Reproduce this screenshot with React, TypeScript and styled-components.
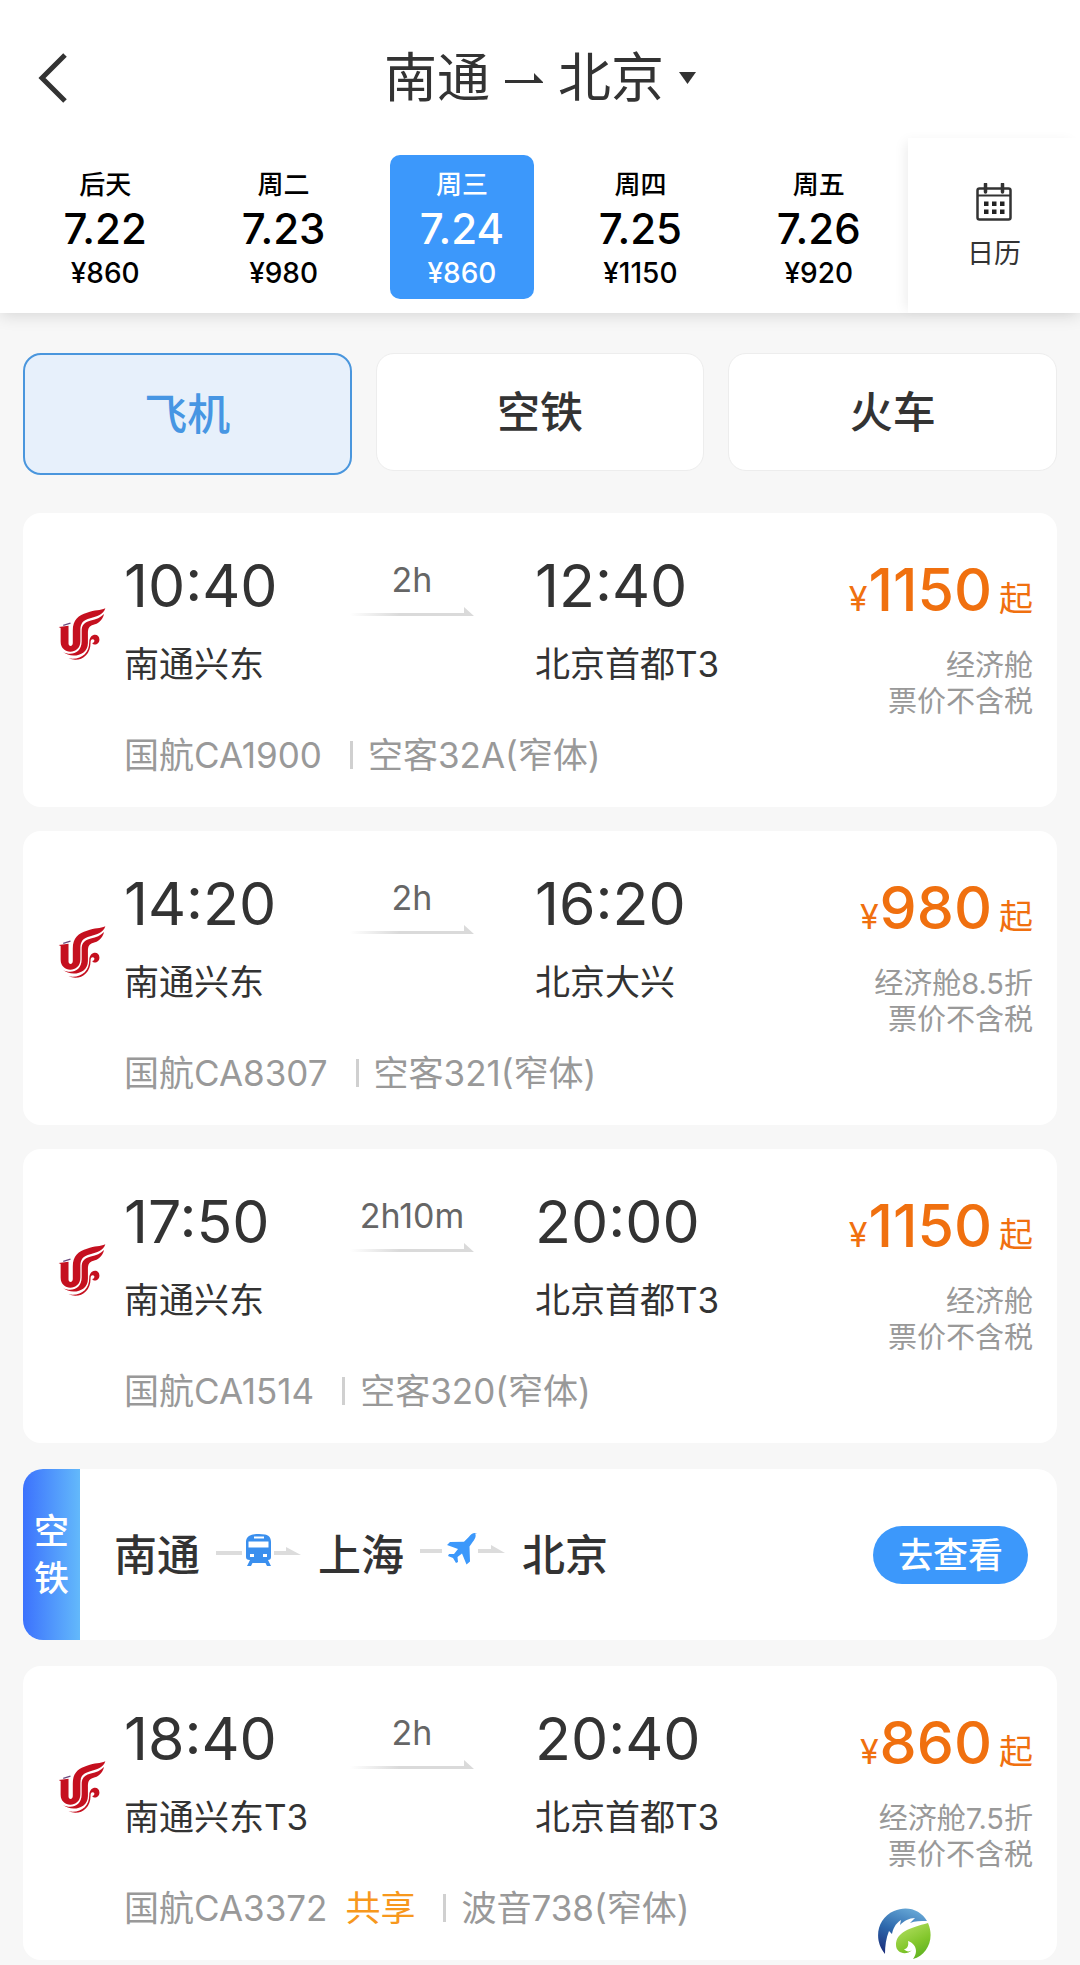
import React, { useState } from "react";
import styled, { createGlobalStyle } from "styled-components";

const GlobalStyle = createGlobalStyle`
  *, *::before, *::after { box-sizing: border-box; }
  body {
    margin: 0;
    background: #f7f7f7;
    color: #333;
    font-family: Inter, "Noto Sans CJK SC", sans-serif;
  }
  button {
    margin: 0;
    padding: 0;
    border: 0;
    background: none;
    color: inherit;
    font: inherit;
    cursor: pointer;
  }
  svg { display: block; flex: none; }
`;

const Page = styled.div`
  position: relative;
  padding-bottom: 5px;
`;

const Header = styled.header`
  position: relative;
  background: #fff;
  box-shadow: 0 2px 16px rgba(0, 0, 0, 0.14);
`;

const TitleBar = styled.div`
  display: grid;
  grid-template-columns: 104px 1fr 104px;
  align-items: center;
  padding: 42px 0 24px;
`;

const BackButton = styled.button`
  justify-self: start;
  padding: 10px 36px;
`;

const RouteButton = styled.button`
  display: flex;
  align-items: center;
  justify-content: center;
  gap: 15px;
  font-size: 53px;
  line-height: 72px;
`;

const DateStrip = styled.div`
  display: flex;
  height: 175px;
`;

const Dates = styled.div`
  flex: 1;
  display: grid;
  grid-template-columns: repeat(5, 1fr);
  justify-items: center;
  align-items: start;
  padding: 17px 0 0 16px;
`;

const DateButton = styled.button<{ $active: boolean }>`
  display: flex;
  flex-direction: column;
  align-items: center;
  width: 144px;
  padding: 10px 0 6px;
  border-radius: 10px;
  color: ${(p) => (p.$active ? "#fff" : "#000")};
  background: ${(p) => (p.$active ? "#3c98fb" : "transparent")};
  font-weight: 500;
`;

const Weekday = styled.span`
  font-size: 26px;
  line-height: 40px;
`;

const DayNumber = styled.span`
  font-size: 42px;
  line-height: 48px;
`;

const DayFare = styled.span`
  font-size: 28px;
  line-height: 40px;
`;

const CalendarButton = styled.button`
  display: flex;
  flex-direction: column;
  align-items: center;
  justify-content: center;
  gap: 14px;
  width: 172px;
  padding-top: 4px;
  background: #fff;
  box-shadow: -6px 0 12px -4px rgba(0, 0, 0, 0.08);
  font-size: 27px;
  line-height: 38px;
`;

const Content = styled.main`
  padding: 40px 23px 0;
`;

const Tabs = styled.div`
  display: grid;
  grid-template-columns: repeat(3, 1fr);
  gap: 24px;
  align-items: start;
  margin-bottom: 38px;
`;

const Tab = styled.button<{ $active: boolean }>`
  height: ${(p) => (p.$active ? "122px" : "118px")};
  border: ${(p) => (p.$active ? "2px solid #4a96dd" : "1px solid #ededed")};
  border-radius: 18px;
  background: ${(p) => (p.$active ? "#e7f0fb" : "#fff")};
  color: ${(p) => (p.$active ? "#4796e3" : "#333")};
  font-size: 43px;
  font-weight: 500;
  line-height: 60px;
`;

const List = styled.ul`
  display: flex;
  flex-direction: column;
  gap: 24px;
  margin: 0;
  padding: 0;
  list-style: none;
`;

const Card = styled.li`
  display: flex;
  padding: 43px 24px 28px 0;
  border-radius: 18px;
  background: #fff;
`;

const Carrier = styled.div`
  width: 101px;
  padding: 51px 0 0 35px;
`;

const Flight = styled.div`
  flex: 1;
`;

const Schedule = styled.div`
  display: grid;
  grid-template-columns: 226px 124px 1fr auto;
  align-items: start;
`;

const Stop = styled.div<{ $indent?: boolean }>`
  display: flex;
  flex-direction: column;
  gap: 24px;
  padding-left: ${(p) => (p.$indent ? "61px" : "0")};
`;

const Time = styled.time`
  font-size: 59px;
  line-height: 60px;
`;

const Airport = styled.span`
  font-size: 35px;
  line-height: 48px;
`;

const Duration = styled.div`
  display: flex;
  flex-direction: column;
  align-items: center;
  color: #666;
  font-size: 34px;
  line-height: 48px;
`;

const Fare = styled.div`
  display: flex;
  flex-direction: column;
  align-items: flex-end;
  gap: 28px;
  padding-top: 4px;
`;

const Price = styled.div`
  display: flex;
  align-items: baseline;
  height: 60px;
  color: #f0700f;
  font-size: 34px;
  line-height: 60px;
`;

const Amount = styled.strong`
  margin: 0 7px 0 1px;
  font-size: 59px;
  font-weight: 500;
`;

const FareNote = styled.div`
  color: #999;
  font-size: 29px;
  line-height: 36px;
  text-align: right;
`;

const Details = styled.div`
  display: flex;
  align-items: center;
  margin-top: 11px;
  color: #999;
  font-size: 35px;
  line-height: 48px;
`;

const Shared = styled.span`
  margin-left: 18px;
  color: #f7981d;
`;

const Divider = styled.span`
  width: 3px;
  height: 28px;
  margin: 0 15px 0 28px;
  background: #d0d0d0;
`;

const AirRailCard = styled.li`
  display: flex;
  align-items: center;
  gap: 34px;
  height: 171px;
  margin: 2px 0;
  padding-right: 29px;
  overflow: hidden;
  border-radius: 20px;
  background: #fff;
`;

const SideLabel = styled.div`
  display: flex;
  align-items: center;
  justify-content: center;
  align-self: stretch;
  width: 57px;
  background: linear-gradient(90deg, #3c72fd, #63b9fb);
  color: #fff;
  font-size: 35px;
  font-weight: 500;
  line-height: 47px;
  text-align: center;
`;

const SideText = styled.span`
  width: 35px;
`;

const AirRailRoute = styled.div`
  flex: 1;
  display: flex;
  align-items: flex-start;
  gap: 16px;
  font-size: 43px;
  font-weight: 500;
  line-height: 58px;
`;

const ViewButton = styled.button`
  width: 155px;
  border-radius: 29px;
  background: #3c98fb;
  color: #fff;
  font-size: 35px;
  font-weight: 500;
  line-height: 58px;
`;

const SiteMark = styled.div`
  position: absolute;
  right: 149px;
  bottom: 5px;
`;

const BackIcon = () => (
  <svg width="32" height="52" viewBox="0 0 32 52" fill="none" stroke="#333" strokeWidth="5">
    <path d="M29 3 6 26l23 23" />
  </svg>
);

const RouteArrow = () => (
  <svg width="38" height="12" viewBox="0 0 38 12">
    <path d="M0 8h29V1l9 9v1H0z" fill="#333" />
  </svg>
);

const Caret = () => (
  <svg width="17" height="12" viewBox="0 0 17 12">
    <path d="M0 0h17L8.500 12z" fill="#333" />
  </svg>
);

const CalendarIcon = () => (
  <svg width="36" height="38" viewBox="0 0 36 38">
    <rect x="1.500" y="5.500" width="33" height="31" rx="2" fill="none" stroke="#333" strokeWidth="2.500" />
    <path d="M2 12.500h32" stroke="#333" strokeWidth="2" />
    <path d="M9.500 1v8M26.500 1v8" stroke="#333" strokeWidth="3.500" strokeLinecap="round" />
    <g fill="#222">
      {[8, 16, 24].map((x) =>
        [18.500, 26.500].map((y) => <rect key={`${x}-${y}`} x={x} y={y} width="4.500" height="4.500" />)
      )}
    </g>
  </svg>
);

const AirChinaLogo = () => (
  <svg width="48" height="54" viewBox="52 48 146 162" role="img" aria-label="国航">
    <g fill="#c5101f">
      <path d="M54 108l30-4v54c0 10 13 10 13-2v-38c0-34 18-46 43-54 25-8 40-6 56-13-6 19-26 25-46 30-22 6-30 15-30 37v34c0 40-60 42-60 0v-41z" />
      <path d="M66 183c26 15 58 3 58-31v-32c0-18 8-27 28-32 16-4 30-9 40-20-4 20-20 30-32 33-14 4-17 11-17 27v28c0 40-51 48-77 27z" />
      <path d="M84 203c38 6 63-15 63-49 0-28 31-30 31-8 0 15-17 20-22 10 8 0 9-11 2-11-6 0-7 5-7 11 0 40-34 61-67 47z" />
    </g>
    <path d="M68 103l22-7" stroke="#6b4a7e" strokeWidth="4" />
  </svg>
);

const DurationArrow = () => (
  <svg width="124" height="12" viewBox="0 0 124 12">
    <defs>
      <linearGradient id="trail" x1="0" x2="1" y1="0" y2="0">
        <stop offset="0" stopColor="#dadada" stopOpacity="0" />
        <stop offset="0.4" stopColor="#dadada" />
        <stop offset="1" stopColor="#dadada" />
      </linearGradient>
    </defs>
    <path d="M0 9h114V3l10 9H0z" fill="url(#trail)" />
  </svg>
);

const TrainLink = () => (
  <svg width="86" height="50" viewBox="0 0 86 50">
    <path d="M0 25h26v4H0zM58 25h12v-4l15 8H58z" fill="#dcdcdc" />
    <path
      transform="translate(0 7)"
      fillRule="evenodd"
      d="M30 9c0-5 4-7 7-7.500 4-.7 8-.7 12 0 3 .5 6 2.500 6 7.500v15c0 2-1 3-3 3l3 6h-4l-1.500-3h-13L35 33h-4l3-6c-3 0-4-1-4-3zM38 3.500v2h10v-2zM32.500 8.500v6h20v-6zM34 21v3h4v-3zM47 21v3h4v-3z"
      fill="#3a8fee"
    />
  </svg>
);

const PlaneLink = () => (
  <svg width="86" height="50" viewBox="0 0 86 50">
    <path d="M0 23h22v4H0zM58 23h13v-4l14 8H58z" fill="#dcdcdc" />
    <path
      transform="translate(0 5)"
      d="M55 2.500c1.500 2 .3 5-2 8l-3.500 5 .5 15-3.500 3-4.500-11-4.500 3.500.5 5-2 1-3-5-5-2 1-2 5 0 4-5-11-4 3-3 14-.2 5-5c2-3 5-4.500 8-3.300z"
      fill="#3c98fb"
    />
  </svg>
);

const SiteLogo = () => (
  <svg width="54" height="52" viewBox="0 0 54 52">
    <defs>
      <linearGradient id="sky" x1="0.6" x2="0.2" y1="0" y2="1">
        <stop offset="0" stopColor="#63a4d4" />
        <stop offset="0.5" stopColor="#2d68ac" />
        <stop offset="1" stopColor="#1c2f7c" />
      </linearGradient>
      <linearGradient id="leaf" x1="0.2" x2="0.7" y1="0" y2="1">
        <stop offset="0" stopColor="#b4df63" />
        <stop offset="0.6" stopColor="#82c62b" />
        <stop offset="1" stopColor="#5cb020" />
      </linearGradient>
    </defs>
    <path d="M8 46C-4 32 0 10 17 3c13-6 27-1 33 10-7 0-12 0-17 2l5-5c-6 0-11 3-15 7l1-5c-6 4-8 9-9 14l-3-3c-3 7-4 15-4 23z" fill="url(#sky)" />
    <path d="M51 15c7 16-1 32-15 36 5-6 4-15-5-18 1 5-1 8-4 8 2 3 6 3 8 1-6 6-16 3-16-5 0-13 14-17 32-22z" fill="url(#leaf)" />
  </svg>
);

const DATES = [
  { weekday: "后天", day: "7.22", fare: "¥860" },
  { weekday: "周二", day: "7.23", fare: "¥980" },
  { weekday: "周三", day: "7.24", fare: "¥860" },
  { weekday: "周四", day: "7.25", fare: "¥1150" },
  { weekday: "周五", day: "7.26", fare: "¥920" },
];

const MODES = ["飞机", "空铁", "火车"];

interface FlightInfo {
  depart: string;
  from: string;
  duration: string;
  arrive: string;
  to: string;
  price: string;
  cabin: string;
  number: string;
  shared?: boolean;
  aircraft: string;
}

const FLIGHTS: FlightInfo[] = [
  { depart: "10:40", from: "南通兴东", duration: "2h", arrive: "12:40", to: "北京首都T3", price: "1150", cabin: "经济舱", number: "国航CA1900", aircraft: "空客32A(窄体)" },
  { depart: "14:20", from: "南通兴东", duration: "2h", arrive: "16:20", to: "北京大兴", price: "980", cabin: "经济舱8.5折", number: "国航CA8307", aircraft: "空客321(窄体)" },
  { depart: "17:50", from: "南通兴东", duration: "2h10m", arrive: "20:00", to: "北京首都T3", price: "1150", cabin: "经济舱", number: "国航CA1514", aircraft: "空客320(窄体)" },
  { depart: "18:40", from: "南通兴东T3", duration: "2h", arrive: "20:40", to: "北京首都T3", price: "860", cabin: "经济舱7.5折", number: "国航CA3372", shared: true, aircraft: "波音738(窄体)" },
];

const FlightCard = ({ flight }: { flight: FlightInfo }) => (
  <Card>
    <Carrier>
      <AirChinaLogo />
    </Carrier>
    <Flight>
      <Schedule>
        <Stop>
          <Time>{flight.depart}</Time>
          <Airport>{flight.from}</Airport>
        </Stop>
        <Duration>
          {flight.duration}
          <DurationArrow />
        </Duration>
        <Stop $indent>
          <Time>{flight.arrive}</Time>
          <Airport>{flight.to}</Airport>
        </Stop>
        <Fare>
          <Price>
            <span>¥</span>
            <Amount>{flight.price}</Amount>
            <span>起</span>
          </Price>
          <FareNote>
            {flight.cabin}
            <br />
            票价不含税
          </FareNote>
        </Fare>
      </Schedule>
      <Details>
        <span>{flight.number}</span>
        {flight.shared && <Shared>共享</Shared>}
        <Divider />
        <span>{flight.aircraft}</span>
      </Details>
    </Flight>
  </Card>
);

export default function App() {
  const [date, setDate] = useState(2);
  const [mode, setMode] = useState(0);

  return (
    <>
      <GlobalStyle />
      <Page>
        <Header>
          <TitleBar>
            <BackButton aria-label="返回">
              <BackIcon />
            </BackButton>
            <RouteButton>
              <span>南通</span>
              <RouteArrow />
              <span>北京</span>
              <Caret />
            </RouteButton>
          </TitleBar>
          <DateStrip>
            <Dates>
              {DATES.map((d, i) => (
                <DateButton key={d.day} $active={i === date} aria-pressed={i === date} onClick={() => setDate(i)}>
                  <Weekday>{d.weekday}</Weekday>
                  <DayNumber>{d.day}</DayNumber>
                  <DayFare>{d.fare}</DayFare>
                </DateButton>
              ))}
            </Dates>
            <CalendarButton>
              <CalendarIcon />
              日历
            </CalendarButton>
          </DateStrip>
        </Header>
        <Content>
          <Tabs role="tablist">
            {MODES.map((label, i) => (
              <Tab key={label} role="tab" $active={i === mode} aria-selected={i === mode} onClick={() => setMode(i)}>
                {label}
              </Tab>
            ))}
          </Tabs>
          <List>
            {FLIGHTS.slice(0, 3).map((f) => (
              <FlightCard key={f.number} flight={f} />
            ))}
            <AirRailCard>
              <SideLabel>
                <SideText>空铁</SideText>
              </SideLabel>
              <AirRailRoute>
                <span>南通</span>
                <TrainLink />
                <span>上海</span>
                <PlaneLink />
                <span>北京</span>
              </AirRailRoute>
              <ViewButton>去查看</ViewButton>
            </AirRailCard>
            {FLIGHTS.slice(3).map((f) => (
              <FlightCard key={f.number} flight={f} />
            ))}
          </List>
        </Content>
        <SiteMark>
          <SiteLogo />
        </SiteMark>
      </Page>
    </>
  );
}
